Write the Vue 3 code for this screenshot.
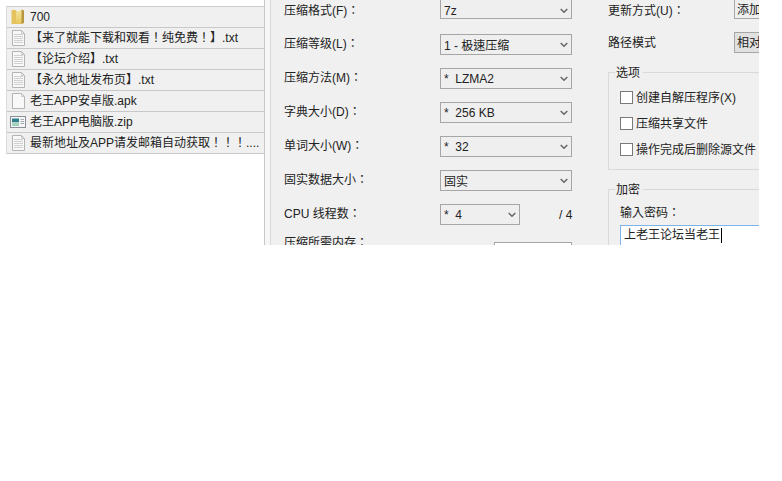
<script setup>
const files = [
  { name: '700', icon: 'folder' },
  { name: '【来了就能下载和观看！纯免费！】.txt', icon: 'txt' },
  { name: '【论坛介绍】.txt', icon: 'txt' },
  { name: '【永久地址发布页】.txt', icon: 'txt' },
  { name: '老王APP安卓版.apk', icon: 'blank' },
  { name: '老王APP电脑版.zip', icon: 'zip' },
  { name: '最新地址及APP请发邮箱自动获取！！！....', icon: 'txt' }
]
const rows = [
  { label: '压缩格式(F)：', value: '7z' },
  { label: '压缩等级(L)：', value: '1 - 极速压缩' },
  { label: '压缩方法(M)：', value: '*  LZMA2' },
  { label: '字典大小(D)：', value: '*  256 KB' },
  { label: '单词大小(W)：', value: '*  32' },
  { label: '固实数据大小：', value: '固实' }
]
const threads = '*  4'
const options = ['创建自解压程序(X)', '压缩共享文件', '操作完成后删除源文件']
</script>

<template>
  <div class="page">
    <ul class="files">
      <li v-for="f in files" :key="f.name" class="file">
        <svg class="icon" width="16" height="16" viewBox="0 0 16 16">
          <template v-if="f.icon === 'folder'">
            <defs>
              <linearGradient id="fold" x1="0" y1="0" x2="0" y2="1">
                <stop offset="0" stop-color="#f7e7a3" />
                <stop offset="1" stop-color="#e6c45a" />
              </linearGradient>
            </defs>
            <path d="M1.500 1h4l1.500 1.500V15H1.500z" fill="#e4c25e" />
            <path d="M6 3l6-2.500V15H6z" fill="url(#fold)" />
            <path d="M11.500 .5L14 1.500V14l-2.500 1z" fill="#b8963f" />
          </template>
          <template v-else-if="f.icon === 'zip'">
            <rect x=".5" y="2.500" width="15" height="11" fill="#f4f6f8" stroke="#8b9096" />
            <rect x="2" y="4.500" width="7" height="7" fill="#2f7f8c" />
            <rect x="2" y="8" width="7" height="3.500" fill="#a9d3c0" />
            <path d="M10.500 5.500h3.500M10.500 7.500h3.500M10.500 9.500h3.500" stroke="#a6abb0" />
          </template>
          <template v-else>
            <path d="M2.500 .5h9l3 3v12h-12z" fill="#f8f8f8" stroke="#b4b4b4" />
            <path d="M11.500 .5v3h3" fill="none" stroke="#c8c8c8" />
            <path v-if="f.icon === 'txt'" d="M4 4.500h9M4 6.500h9M4 8.500h9M4 10.500h9M4 12.500h9" stroke="#d0d0d0" />
          </template>
        </svg>
        <span class="file-name">{{ f.name }}</span>
      </li>
    </ul>

    <section class="dialog">
      <div class="edge"></div>
      <div class="form">
        <div v-for="r in rows" :key="r.label" class="row">
          <span class="label">{{ r.label }}</span>
          <div class="select wide">
            <span class="val">{{ r.value }}</span>
            <svg class="chev" width="8" height="6" viewBox="0 0 8 6"><path d="M.7 1L4 4.300 7.300 1" fill="none" stroke="#666" stroke-width="1.500" /></svg>
          </div>
        </div>
        <div class="row">
          <span class="label">CPU 线程数：</span>
          <div class="select narrow">
            <span class="val">{{ threads }}</span>
            <svg class="chev" width="8" height="6" viewBox="0 0 8 6"><path d="M.7 1L4 4.300 7.300 1" fill="none" stroke="#666" stroke-width="1.500" /></svg>
          </div>
          <span class="total">/ 4</span>
        </div>
        <div class="row mem">
          <span class="label">压缩所需内存：</span>
          <div class="select mem-box"></div>
        </div>
      </div>

      <div class="side">
        <div class="side-row">
          <span class="side-label">更新方式(U)：</span>
          <div class="select cut"><span>添加并替换文件</span></div>
        </div>
        <div class="side-row">
          <span class="side-label">路径模式</span>
          <div class="select cut grey"><span>相对路径</span></div>
        </div>

        <fieldset class="group opts">
          <legend>选项</legend>
          <label v-for="o in options" :key="o" class="check">
            <span class="box"></span>
            <span class="check-text">{{ o }}</span>
          </label>
        </fieldset>

        <fieldset class="group crypt">
          <legend>加密</legend>
          <div class="pw-label">输入密码：</div>
          <div class="pw"><span class="pw-text">上老王论坛当老王</span></div>
        </fieldset>
      </div>
    </section>
  </div>
</template>

<style scoped>
.page {
  display: flex;
  align-items: flex-start;
  width: 782px;
  height: 481px;
  overflow: hidden;
  background: #fff;
  color: #222;
  font-family: "Liberation Sans", "Noto Sans CJK TC", sans-serif;
  font-size: 12px;
}
.files {
  list-style: none;
  margin: 6px 0 0 6px;
  padding: 0;
  width: 258px;
  flex: none;
  box-sizing: border-box;
  border-top: 1px solid #cfcfcf;
  border-left: 1px solid #dcdcdc;
  background: #f0f0f0;
}
.file {
  display: flex;
  align-items: center;
  gap: 4px;
  height: 21px;
  box-sizing: border-box;
  padding-left: 3px;
  border-bottom: 1px solid #c8c8c8;
  white-space: nowrap;
  overflow: hidden;
}
.icon { flex: none; }
.file-name { line-height: 16px; }
.dialog {
  display: flex;
  flex: none;
  width: 495px;
  height: 245px;
  overflow: hidden;
  background: #f0f0f0;
  border-left: 1px solid #c8c8c8;
  box-sizing: border-box;
}
.edge {
  flex: none;
  width: 6px;
  box-sizing: border-box;
  background: #f6f6f6;
  border-right: 1px solid #d9d9d9;
}
.form {
  flex: none;
  width: 337px;
  margin-top: -2px;
  padding-left: 13px;
  box-sizing: border-box;
}
.row {
  display: flex;
  align-items: center;
  height: 21px;
  margin-bottom: 13px;
}
.row:first-child { margin-bottom: 15px; }
.label {
  flex: none;
  width: 156px;
  line-height: 21px;
  margin-bottom: 1px;
  white-space: nowrap;
}
.row:first-child .label {
  margin: 6px 0 0;
}
.row:first-child .select { padding-top: 4px; }
.mem {
  height: 25px;
  padding-top: 4px;
  box-sizing: border-box;
  align-items: flex-start;
}
.mem .label { margin: -9px 0 0; }
.select {
  display: flex;
  align-items: center;
  justify-content: space-between;
  flex: none;
  height: 21px;
  box-sizing: border-box;
  padding: 0 3px;
  background: #efefef;
  border: 1px solid #a6a6a6;
  white-space: nowrap;
  overflow: hidden;
}
.val { white-space: pre; }
.wide { width: 132px; }
.narrow { width: 80px; }
.chev { flex: none; }
.total {
  margin-left: 39px;
  white-space: nowrap;
}
.mem-box {
  width: 78px;
  margin-left: 54px;
  background: #fff;
  border-bottom: none;
}
.side {
  flex: none;
  width: 151px;
  margin-top: -2px;
  overflow: hidden;
}
.side-row {
  display: flex;
  align-items: center;
  height: 21px;
  margin-bottom: 13px;
  white-space: nowrap;
}
.side-label {
  flex: none;
  width: 126px;
}
.side-row:first-child .side-label { margin-top: 2px; }
.side-row + .side-row .side-label { margin-bottom: 2px; }
.cut {
  width: 80px;
  justify-content: flex-start;
  padding-left: 2px;
}
.grey {
  background: #e1e1e1;
  padding-bottom: 2px;
}
.group {
  margin: 0 -10px 0 0;
  padding: 0 0 0 11px;
  border: 1px solid #d9d9d9;
  min-width: 0;
  box-sizing: border-box;
}
.group legend {
  margin-left: -5px;
  padding: 2px 3px 0 1px;
  line-height: 16px;
}
.opts {
  height: 107px;
  margin-top: -3px;
}
.crypt {
  height: 80px;
  margin-top: 10px;
}
.check {
  display: flex;
  align-items: center;
  gap: 3px;
  height: 14px;
  margin-top: 12px;
  white-space: nowrap;
}
.check:first-of-type { margin-top: 9px; }
.check-text { margin-bottom: 2px; }
.box {
  flex: none;
  width: 13px;
  height: 13px;
  box-sizing: border-box;
  background: #fff;
  border: 1px solid #7a7a7a;
}
.pw-label {
  margin-top: 7px;
  line-height: 16px;
}
.pw {
  height: 30px;
  margin-top: 4px;
  padding-left: 3px;
  box-sizing: border-box;
  background: #fff;
  border: 1px solid #7eb4ea;
  line-height: 18px;
}
.pw-text {
  display: inline-block;
  padding-right: 1px;
  border-right: 1px solid #000;
  line-height: 15px;
}
</style>
